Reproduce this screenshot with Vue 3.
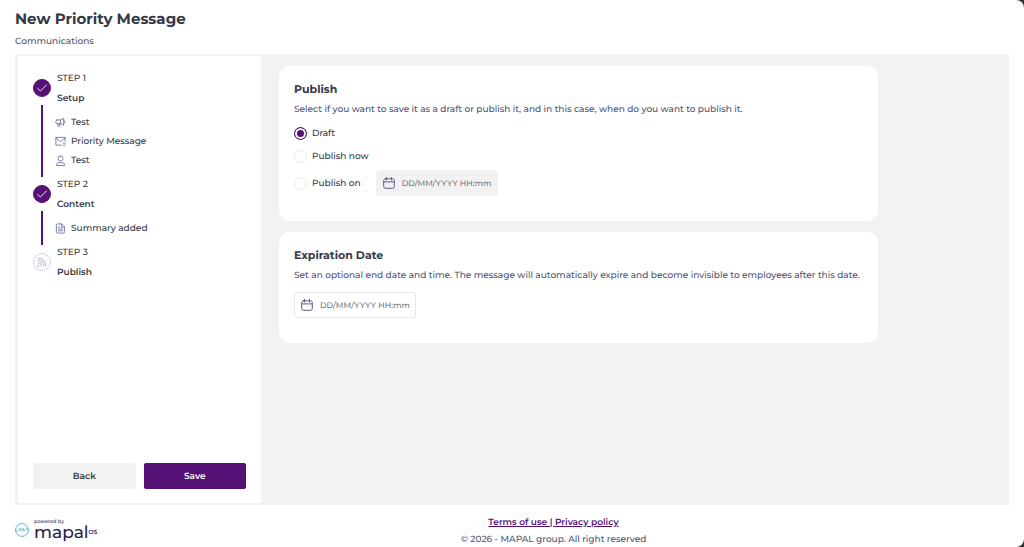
<script setup>
import { ref } from 'vue'

const publishMode = ref('draft')
const publishDate = ref('')
const expirationDate = ref('')

const steps = [
  {
    label: 'STEP 1',
    title: 'Setup',
    done: true,
    items: [
      { icon: 'megaphone', text: 'Test' },
      { icon: 'mail', text: 'Priority Message' },
      { icon: 'user', text: 'Test' },
    ],
  },
  {
    label: 'STEP 2',
    title: 'Content',
    done: true,
    items: [{ icon: 'file', text: 'Summary added' }],
  },
  { label: 'STEP 3', title: 'Publish', done: false, items: [] },
]

const options = [
  { value: 'draft', label: 'Draft' },
  { value: 'now', label: 'Publish now' },
  { value: 'on', label: 'Publish on' },
]

const icons = {
  megaphone: 'M4 6.5 H12 L19 3 V18 L12 14.5 H4 C1 14.5 1 6.5 4 6.5 Z M12 6.5 V14.5 M5.5 14.5 L7 20 H11 L9.5 14.5 M19 8 C23.5 8 23.5 13 19 13',
  mail: 'M22 11 V3 H2 V20 H14 M2 4.5 L12 12.5 L22 4.5 M18 15.5 H22 M18 20 H22',
  user: 'M12 2 A5.5 5.5 0 1 1 12 13 A5.5 5.5 0 1 1 12 2 M3 22 C3 18.5 5 16.5 9 16.5 H15 C19 16.5 21 18.5 21 22 Z',
  file: 'M14 2 H6 C4 2 3 3 3 5 V19 C3 21 4 22 6 22 H18 C20 22 21 21 21 19 V9 Z M14 2 V9 H21 M7 9 H10 M7 13 H17 M7 17 H17',
}
</script>

<template>
  <div class="page">
    <header class="header">
      <h1>New Priority Message</h1>
      <p>Communications</p>
    </header>

    <main class="main">
      <aside class="sidebar">
        <ol class="steps">
          <li v-for="step in steps" :key="step.label" class="step">
            <div class="rail">
              <span class="dot" :class="{ done: step.done }">
                <svg v-if="step.done" viewBox="0 0 18 18" aria-hidden="true">
                  <path d="M4 9.4 L7.2 12.4 L14 5.6" />
                </svg>
                <svg v-else viewBox="0 0 18 18" aria-hidden="true">
                  <path d="M4.5 4.5 A9 9 0 0 1 13.5 13.5 M4.5 7 A6.5 6.5 0 0 1 11 13.5 M4.5 9.7 A3.8 3.8 0 0 1 8.3 13.5 M4.5 12.4 V13.5 H5.6" />
                </svg>
              </span>
              <span v-if="step.items.length" class="line"></span>
            </div>
            <div class="step-body">
              <div class="step-label">{{ step.label }}</div>
              <div class="step-title">{{ step.title }}</div>
              <ul v-if="step.items.length" class="items">
                <li v-for="item in step.items" :key="item.icon">
                  <svg viewBox="0 0 24 24" aria-hidden="true"><path :d="icons[item.icon]" /></svg>
                  <span>{{ item.text }}</span>
                </li>
              </ul>
            </div>
          </li>
        </ol>
        <div class="actions">
          <button type="button" class="btn">Back</button>
          <button type="button" class="btn primary">Save</button>
        </div>
      </aside>

      <div class="content">
        <section class="card">
          <h2>Publish</h2>
          <p>Select if you want to save it as a draft or publish it, and in this case, when do you want to publish it.</p>
          <div class="options" role="radiogroup" aria-label="Publish">
            <div v-for="option in options" :key="option.value" class="option">
              <label>
                <input v-model="publishMode" type="radio" name="publish" :value="option.value" />
                <span>{{ option.label }}</span>
              </label>
              <div v-if="option.value === 'on'" class="date" :class="{ disabled: publishMode !== 'on' }">
                <svg viewBox="0 0 12 12" aria-hidden="true">
                  <path d="M2.5 1.8 H9.5 Q11.3 1.8 11.3 3.6 V9.5 Q11.3 11.3 9.5 11.3 H2.5 Q0.7 11.3 0.7 9.5 V3.6 Q0.7 1.8 2.5 1.8 Z M0.7 4.9 H11.3 M3.5 0.4 V3 M8.5 0.4 V3" />
                </svg>
                <input v-model="publishDate" type="text" placeholder="DD/MM/YYYY HH:mm" aria-label="Publish date" :disabled="publishMode !== 'on'" />
              </div>
            </div>
          </div>
        </section>

        <section class="card">
          <h2>Expiration Date</h2>
          <p>Set an optional end date and time. The message will automatically expire and become invisible to employees after this date.</p>
          <div class="date expiry">
            <svg viewBox="0 0 12 12" aria-hidden="true">
              <path d="M2.5 1.8 H9.5 Q11.3 1.8 11.3 3.6 V9.5 Q11.3 11.3 9.5 11.3 H2.5 Q0.7 11.3 0.7 9.5 V3.6 Q0.7 1.8 2.5 1.8 Z M0.7 4.9 H11.3 M3.5 0.4 V3 M8.5 0.4 V3" />
            </svg>
            <input v-model="expirationDate" type="text" placeholder="DD/MM/YYYY HH:mm" aria-label="Expiration date" />
          </div>
        </section>
      </div>
    </main>

    <footer class="footer">
      <div class="brand">
        <svg class="mark" viewBox="0 0 14 14" aria-hidden="true">
          <circle cx="7" cy="7" r="6.4" />
          <path d="M0.8 8 C2.2 8.4 3 7.8 3.8 6.5 C5 4.6 5.8 5 5.2 6.9 C4.7 8.5 5.5 8.7 6.6 6.8 C7.8 4.7 8.9 4.8 8.3 6.8 C7.8 8.6 8.8 8.6 9.8 7.2 C10.8 5.8 11.7 5.8 13.2 6" />
        </svg>
        <div class="wordmark">
          <span class="powered">powered by</span>
          <span class="name">mapal<sup>OS</sup></span>
        </div>
      </div>
      <div class="legal">
        <div class="links"><a href="#terms">Terms of use | </a><a href="#privacy">Privacy policy</a></div>
        <div>© 2026 - MAPAL group. All right reserved</div>
      </div>
    </footer>
  </div>
</template>

<style>
body {
  margin: 0;
  background: #343434;
}
</style>

<style scoped>
.page {
  box-sizing: border-box;
  min-height: 100vh;
  display: flex;
  flex-direction: column;
  padding: 8px 15px 0;
  background: #fff;
  border-radius: 0 8px 8px 0;
  color: #353845;
  font-family: Montserrat, Inter, "Liberation Sans", sans-serif;
  font-size: 9px;
  font-weight: 500;
  line-height: 16px;
  text-rendering: geometricPrecision;
}
h1, h2, p, ol, ul {
  margin: 0;
  padding: 0;
  list-style: none;
}
.header {
  color: #4f5475;
}
.header h1 {
  color: #353845;
  font-size: 15px;
  font-weight: 700;
  line-height: 22px;
}
.header p {
  padding: 4px 0;
}
.main {
  flex: 1;
  display: flex;
  border: 2px solid #f2f2f4;
  border-width: 2px 0 2px 3px;
  background: #f2f2f4;
}
.sidebar {
  flex: 0 0 243px;
  box-sizing: border-box;
  display: flex;
  flex-direction: column;
  justify-content: space-between;
  padding: 13px 15px 14px;
  background: #fff;
}
.step {
  display: flex;
  gap: 6px;
}
.rail {
  width: 18px;
  display: flex;
  flex-direction: column;
  align-items: center;
}
.dot {
  box-sizing: border-box;
  width: 18px;
  height: 18px;
  margin-top: 10px;
  border: 1px solid #d5d5e3;
  border-radius: 50%;
  color: #a9abc6;
}
.dot.done {
  border-color: #551175;
  background: #551175;
  color: #fff;
}
.dot svg {
  display: block;
  width: 16px;
  height: 16px;
}
svg {
  fill: none;
  stroke: currentColor;
  stroke-width: 1;
  stroke-linecap: round;
  stroke-linejoin: round;
}
.line {
  flex: 1;
  width: 2px;
  margin: 8px 0 -2px;
  background: #551175;
}
.step-label,
.step-title {
  line-height: 20px;
}
.step-title {
  font-weight: 600;
}
.items {
  padding: 4px 0 5px;
}
.items li {
  display: flex;
  align-items: center;
  gap: 5px;
  line-height: 19px;
}
.items svg {
  width: 11px;
  height: 11px;
  margin-left: -2px;
  color: #73779b;
  stroke-width: 2;
}
.actions {
  display: flex;
  gap: 8px;
}
.btn {
  flex: 1;
  height: 26px;
  padding: 1px 0 0;
  border: 0;
  border-radius: 2px;
  background: #f2f2f2;
  color: #353845;
  font: inherit;
  font-weight: 600;
  text-rendering: inherit;
}
.btn.primary {
  background: #551175;
  color: #fff;
}
.content {
  flex: 1;
  min-width: 0;
  padding: 10px 0 10px 18px;
}
.card {
  box-sizing: border-box;
  width: 82%;
  margin-bottom: 11px;
  padding: 15px 15px 25px;
  border-radius: 11px;
  background: #fff;
}
.card h2 {
  font-size: 11px;
  font-weight: 700;
  line-height: 16px;
}
.card p {
  margin-top: 5px;
  color: #4f5475;
}
.options {
  display: flex;
  flex-direction: column;
  gap: 4px;
  margin-top: 6px;
}
.option {
  display: flex;
  align-items: center;
  gap: 15px;
  min-height: 19px;
}
.option label {
  display: flex;
  align-items: center;
  gap: 5px;
}
.option label span {
  padding-top: 1px;
}
.option input[type="radio"] {
  appearance: none;
  box-sizing: border-box;
  width: 13px;
  height: 13px;
  margin: 0;
  border: 1px solid #e9e9ee;
  border-radius: 50%;
  background: #fff;
}
.option input[type="radio"]:checked {
  border-color: #551175;
  background: #551175;
  box-shadow: inset 0 0 0 2px #fff;
}
.date {
  box-sizing: border-box;
  width: 122px;
  height: 26px;
  display: flex;
  align-items: center;
  gap: 7px;
  padding-left: 6px;
  border: 1px solid #e7e7ec;
  border-radius: 3px;
  background: #fff;
  color: #5b5f83;
}
.date.disabled {
  border-color: #f2f2f2;
  background: #f2f2f2;
}
.date.expiry {
  margin-top: 8px;
}
.date svg {
  flex: none;
  width: 12px;
  height: 12px;
}
.date input {
  flex: 1;
  min-width: 0;
  padding: 1px 0 0;
  border: 0;
  outline: 0;
  background: transparent;
  color: #353845;
  font: inherit;
  font-size: 8px;
  text-rendering: inherit;
}
.date input::placeholder {
  color: #757575;
  opacity: 1;
}
.footer {
  display: flex;
  align-items: center;
  height: 42px;
}
.brand {
  display: flex;
  align-items: center;
  gap: 5px;
  width: 83px;
  padding-top: 8px;
  box-sizing: border-box;
}
.mark {
  width: 14px;
  height: 14px;
  flex: none;
  color: #5fbccb;
}
.wordmark {
  display: flex;
  flex-direction: column;
  color: #2b1b4d;
}
.powered {
  font-size: 5px;
  line-height: 6px;
}
.name {
  display: flex;
  font-size: 17px;
  line-height: 17px;
}
.name sup {
  font-size: 6px;
  font-weight: 600;
  line-height: 14px;
}
.legal {
  flex: 1;
  padding-top: 10px;
  color: #4f5475;
  line-height: 17px;
  text-align: center;
}
.links a {
  color: #551175;
  font-weight: 600;
  text-decoration: underline;
  white-space: pre;
}
</style>
